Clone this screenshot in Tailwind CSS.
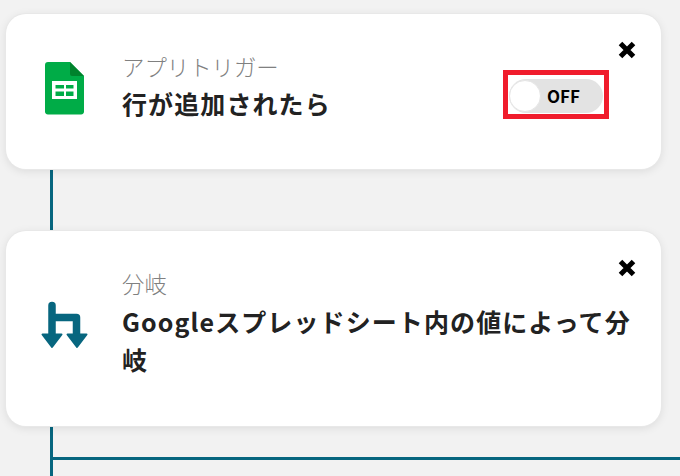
<!DOCTYPE html>
<html lang="ja">

<head>
    <meta charset="UTF-8" />
    <title>フロー</title>
    <script src="https://cdn.jsdelivr.net/npm/@tailwindcss/browser@4"></script>
</head>

<body class="bg-[#f2f2f2] h-[476px] w-[680px] overflow-hidden font-['Noto_Sans_CJK_JP','Liberation_Sans',sans-serif] text-[#222]">
    <div class="pt-[14px] pl-[6px] pr-[19px]">
        <!-- Trigger card -->
        <div class="relative flex items-center h-[155px] bg-white rounded-[20px] shadow-[0_0_0_1px_#e8e8e8,0_2px_10px_rgba(0,0,0,0.1)]">
            <div class="w-[116px] shrink-0 pl-[39px] -mt-[7px]">
                <svg class="block" width="39" height="53" viewBox="0 0 39 53">
                    <path d="M3 0H25L39 14V49a3 3 0 0 1-3 3.5H3a3 3 0 0 1-3-3.5V3a3 3 0 0 1 3-3z" fill="#00ac47" />
                    <path d="M25 0L39 14H27a2 2 0 0 1-2-2z" fill="#00832d" />
                    <path fill-rule="evenodd" d="M7 19H32V37H7z M10.5 23V26.5H19V23z M21 23V26.5H28.5V23z M10.5 29.5V34H19V29.5z M21 29.5V34H28.5V29.5z" fill="#fff" />
                </svg>
            </div>
            <div class="-mt-[12px]">
                <div class="text-[22.4px] leading-[32px] font-light text-[#808080]">アプリトリガー</div>
                <div class="mt-[2px] text-[25px] leading-[38px] font-bold tracking-[1.1px]">行が追加されたら</div>
            </div>
            <svg class="absolute top-[26px] right-[24px]" width="20" height="20" viewBox="0 0 20 20">
                <path d="M3.5 3.5L16.5 16.5M16.5 3.5L3.5 16.5" stroke="#000" stroke-width="5" />
            </svg>
            <!-- Toggle with red highlight -->
            <div class="absolute top-[56px] left-[497px] w-[106px] h-[49px] pt-[3px] border-[5px] border-[#f01c2c] flex items-center justify-center">
                <div class="flex items-center shrink-0 w-[94px] h-[34px] rounded-full bg-[#e3e3e3]">
                    <div class="w-[32px] h-[32px] rounded-full bg-white border border-[#e6e6e6]"></div>
                    <span class="ml-[6px] text-[17px] font-bold text-black">OFF</span>
                </div>
            </div>
        </div>

        <div class="ml-[44px] w-[3px] h-[62px] bg-[#07667f]"></div>

        <!-- Branch card -->
        <div class="relative flex items-center h-[195px] bg-white rounded-[20px] shadow-[0_0_0_1px_#e8e8e8,0_2px_10px_rgba(0,0,0,0.1)]">
            <div class="w-[116px] shrink-0 pl-[35px] mt-[-7px]">
                <svg class="block" width="47" height="48" viewBox="0 0 47 48">
                    <path d="M11 4.5V35M11 16.5H35.5V35" fill="none" stroke="#07667f" stroke-width="7.5" stroke-linecap="round" stroke-linejoin="round" />
                    <path d="M1.5 33.5H20.5L11 46z M26.5 33.5H45.5L36 46z" fill="#07667f" stroke="#07667f" stroke-width="2" stroke-linejoin="round" />
                </svg>
            </div>
            <div class="-mt-[12px] w-[515px]">
                <div class="text-[22.4px] leading-[32px] font-light text-[#808080]">分岐</div>
                <div class="mt-[3px] text-[25px] leading-[38px] font-bold tracking-[1.1px]">Googleスプレッドシート内の値によって分岐</div>
            </div>
            <svg class="absolute top-[27px] right-[24px]" width="20" height="20" viewBox="0 0 20 20">
                <path d="M3.5 3.5L16.5 16.5M16.5 3.5L3.5 16.5" stroke="#000" stroke-width="5" />
            </svg>
        </div>
    </div>

    <!-- Connector to next steps -->
    <div class="flex pl-[50px] h-[50px]">
        <div class="w-[3px] mt-[1px] bg-[#07667f]"></div>
        <div class="flex-1 h-[3px] mt-[31px] bg-[#07667f]"></div>
    </div>
</body>

</html>
